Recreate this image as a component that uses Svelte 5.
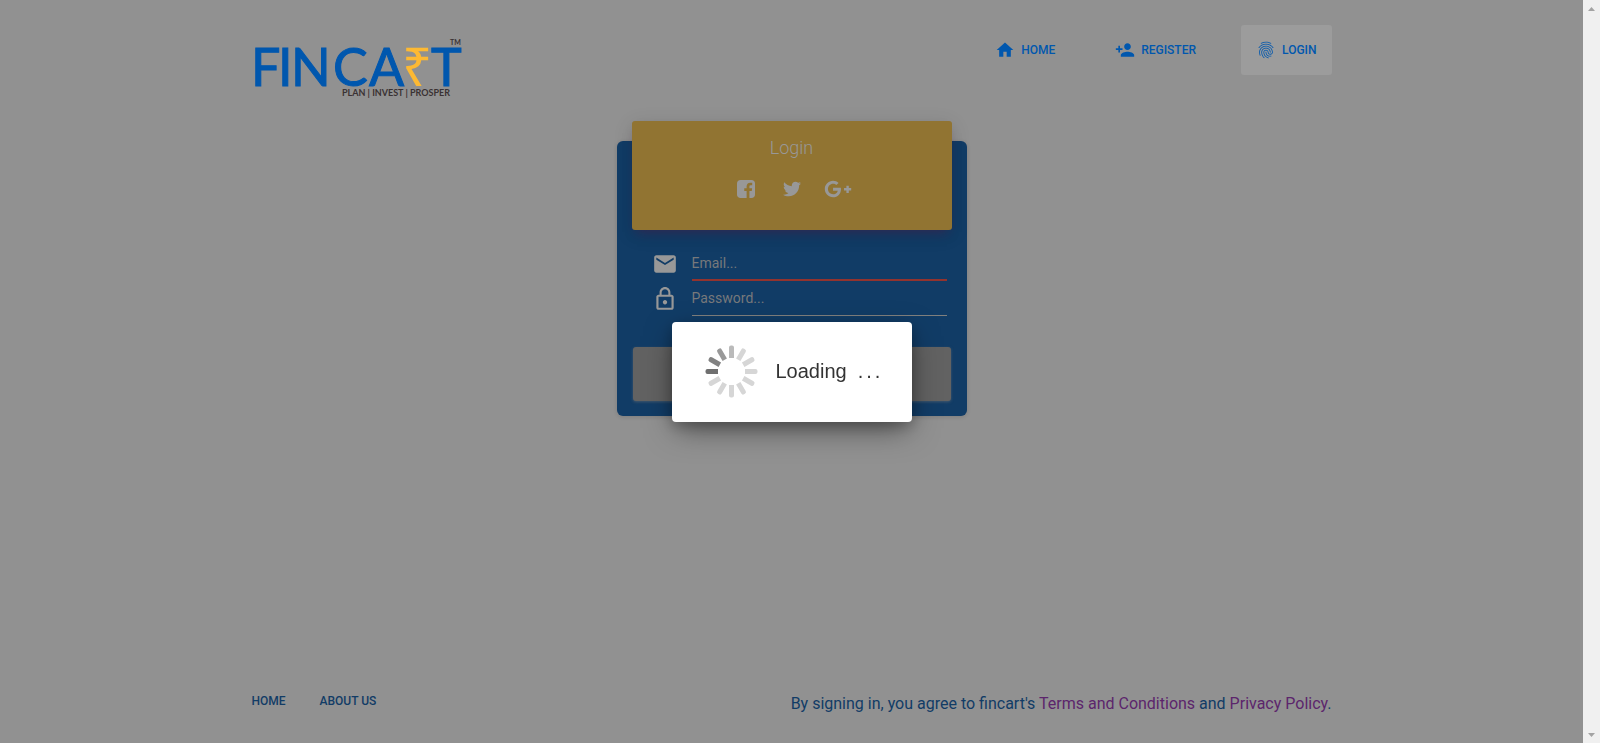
<script>
  const navItems = [
    { label: 'Home', icon: 'home', active: false },
    { label: 'Register', icon: 'register', active: false },
    { label: 'Login', icon: 'login', active: true }
  ];

  const icons = {
    home: 'M10 20v-6h4v6h5v-8h3L12 3 2 12h3v8z',
    register:
      'M15 12c2.21 0 4-1.79 4-4s-1.79-4-4-4-4 1.79-4 4 1.79 4 4 4zm-9-2V7H4v3H1v2h3v3h2v-3h3v-2H6zm9 4c-2.67 0-8 1.34-8 4v2h16v-2c0-2.66-5.33-4-8-4z',
    login:
      'M17.81 4.47c-.08 0-.16-.02-.23-.06C15.66 3.42 14 3 12.01 3c-1.98 0-3.86.47-5.57 1.41-.24.13-.54.04-.68-.2-.13-.24-.04-.55.2-.68C7.82 2.52 9.86 2 12.01 2c2.13 0 3.99.47 6.03 1.52.25.13.34.43.21.67-.09.18-.26.28-.44.28zM3.5 9.72c-.1 0-.2-.03-.29-.09-.23-.16-.28-.47-.12-.7.99-1.4 2.25-2.5 3.75-3.27C9.98 4.04 14 4.03 17.15 5.65c1.5.77 2.76 1.86 3.75 3.25.16.22.11.54-.12.7-.23.16-.54.11-.7-.12-.9-1.26-2.04-2.25-3.39-2.94-2.87-1.47-6.54-1.47-9.4.01-1.36.7-2.5 1.7-3.4 2.96-.08.14-.23.21-.39.21zm6.25 12.07c-.13 0-.26-.05-.35-.15-.87-.87-1.34-1.43-2.01-2.64-.69-1.23-1.05-2.73-1.05-4.34 0-2.97 2.54-5.39 5.66-5.39s5.66 2.42 5.66 5.39c0 .28-.22.5-.5.5s-.5-.22-.5-.5c0-2.42-2.09-4.39-4.66-4.39-2.57 0-4.66 1.97-4.66 4.39 0 1.44.32 2.77.93 3.85.64 1.15 1.08 1.64 1.85 2.42.19.2.19.51 0 .71-.11.1-.24.15-.37.15zm7.17-1.85c-1.19 0-2.24-.3-3.1-.89-1.49-1.01-2.38-2.65-2.38-4.39 0-.28.22-.5.5-.5s.5.22.5.5c0 1.41.72 2.74 1.94 3.56.71.48 1.54.71 2.54.71.24 0 .64-.03 1.04-.1.27-.05.53.13.58.41.05.27-.13.53-.41.58-.57.11-1.07.12-1.21.12zM14.91 22c-.04 0-.09-.01-.13-.02-1.59-.44-2.63-1.03-3.72-2.1-1.4-1.39-2.17-3.24-2.17-5.22 0-1.62 1.38-2.94 3.08-2.94 1.7 0 3.08 1.32 3.08 2.94 0 1.07.93 1.94 2.08 1.94s2.08-.87 2.08-1.94c0-3.77-3.25-6.83-7.25-6.83-2.84 0-5.44 1.58-6.61 4.03-.39.81-.59 1.76-.59 2.8 0 .78.07 2.01.67 3.61.1.26-.03.55-.29.64-.26.1-.55-.04-.64-.29-.49-1.31-.73-2.61-.73-3.96 0-1.2.23-2.29.68-3.24 1.33-2.79 4.28-4.6 7.51-4.6 4.55 0 8.25 3.51 8.25 7.83 0 1.62-1.38 2.94-3.08 2.94s-3.08-1.32-3.08-2.94c0-1.07-.93-1.94-2.08-1.94s-2.08.87-2.08 1.94c0 1.71.66 3.31 1.87 4.51.95.94 1.86 1.46 3.27 1.85.27.07.42.35.35.61-.05.23-.26.38-.47.38z'
  };

  const socials = [
    {
      name: 'Facebook',
      box: '0 128 1536 1536',
      w: 18,
      h: 18,
      d: 'M1248 128q119 0 203.500 84.500t84.500 203.500v960q0 119-84.500 203.500t-203.500 84.500h-188v-595h199l30-232h-229v-148q0-56 23.500-84t91.500-28l122-1v-207q-63-9-178-9-136 0-217.500 80t-81.500 226v171h-200v232h200v595h-532q-119 0-203.500-84.500t-84.500-203.500v-960q0-119 84.500-203.500t203.500-84.500h960z'
    },
    {
      name: 'Twitter',
      box: '0 0 512 512',
      w: 18,
      h: 18,
      d: 'M459.37 151.716c.325 4.548.325 9.097.325 13.645 0 138.72-105.583 298.558-298.558 298.558-59.452 0-114.68-17.219-161.137-47.106 8.447.974 16.568 1.299 25.34 1.299 49.055 0 94.213-16.568 130.274-44.832-46.132-.975-84.792-31.188-98.112-72.772 6.498.974 12.995 1.624 19.818 1.624 9.421 0 18.843-1.3 27.614-3.573-48.081-9.747-84.143-51.98-84.143-102.985v-1.299c13.969 7.797 30.214 12.67 47.431 13.319-28.264-18.843-46.781-51.005-46.781-87.391 0-19.492 5.197-37.36 14.294-52.954 51.655 63.675 129.3 105.258 216.365 109.807-1.624-7.797-2.599-15.918-2.599-24.04 0-57.828 46.782-104.934 104.934-104.934 30.213 0 57.502 12.67 76.67 33.137 23.715-4.548 46.456-13.32 66.599-25.34-7.798 24.366-24.366 44.833-46.132 57.827 21.117-2.273 41.584-8.122 60.426-16.243-14.292 20.791-32.161 39.308-52.628 54.253z'
    },
    {
      name: 'Google Plus',
      box: '0 0 640 512',
      w: 28,
      h: 22,
      d: 'M386.061 228.496c1.834 9.692 3.143 19.384 3.143 31.956C389.204 370.205 315.599 448 204.8 448c-106.084 0-192-85.915-192-192s85.916-192 192-192c51.864 0 95.083 18.859 128.611 50.292l-52.126 50.03c-14.145-13.621-39.028-29.599-76.485-29.599-65.484 0-118.92 54.221-118.92 121.277 0 67.056 53.436 121.277 118.92 121.277 75.961 0 104.513-54.745 108.965-82.773H204.8v-66.009h181.261zm185.406 6.437V179.2h-56.001v55.733h-55.733v56.001h55.733v55.733h56.001v-55.733H627.2v-56.001h-55.733z'
    }
  ];

  // Spinner blades, clockwise from the top.
  const blades = [
    '#bababa', '#d6d6d6', '#d6d6d6', '#d6d6d6', '#d6d6d6', '#d6d6d6',
    '#d6d6d6', '#d6d6d6', '#d6d6d6', '#6f6f6f', '#828282', '#999999'
  ];
</script>

<div class="shell">
  <div class="page">
    <header class="container">
      <a class="brand" href="#home" aria-label="Fincart">
        <svg width="222" height="85" viewBox="12 0 222 85">
          <g fill="#0057ae" stroke="#0057ae" stroke-width="1" font-family="Lato, sans-serif" font-size="52">
            <text x="11 38 51 93 129 191" y="61">FINCAT</text>
          </g>
          <text x="162" y="61" fill="#fdb933" font-family="'Noto Sans', sans-serif" font-size="53">₹</text>
          <text x="102" y="71" fill="#3a3233" font-family="Lato, sans-serif" font-weight="700" font-size="9">PLAN | INVEST | PROSPER</text>
          <text x="210" y="20" fill="#3a3233" font-family="Lato, sans-serif" font-weight="700" font-size="7">TM</text>
        </svg>
      </a>
      <nav>
        {#each navItems as item}
          <a class="nav-link" class:active={item.active} href={'#' + item.icon}>
            <svg width="20" height="20" viewBox="0 0 24 24"><path d={icons[item.icon]} /></svg>
            <span>{item.label}</span>
          </a>
        {/each}
      </nav>
    </header>

    <main>
      <form class="card" onsubmit={(e) => e.preventDefault()}>
        <div class="card-head">
          <h1>Login</h1>
          <div class="socials">
            {#each socials as s}
              <button type="button" aria-label={s.name}>
                <svg width={s.w} height={s.h} viewBox={s.box}><path d={s.d} /></svg>
              </button>
            {/each}
          </div>
        </div>
        <div class="fields">
          <div class="field">
            <label for="email" aria-label="Email">
              <svg width="26" height="26" viewBox="0 0 24 24"><path d="M20 4H4c-1.1 0-1.99.9-1.99 2L2 18c0 1.1.9 2 2 2h16c1.1 0 2-.9 2-2V6c0-1.1-.9-2-2-2zm0 4l-8 5-8-5V6l8 5 8-5v2z" /></svg>
            </label>
            <input id="email" class="invalid" type="email" placeholder="Email..." />
          </div>
          <div class="field">
            <label for="password" aria-label="Password">
              <svg width="26" height="26" viewBox="0 0 24 24"><path d="M12 17c1.1 0 2-.9 2-2s-.9-2-2-2-2 .9-2 2 .9 2 2 2zm6-9h-1V6c0-2.76-2.24-5-5-5S7 3.24 7 6v2H6c-1.1 0-2 .9-2 2v10c0 1.1.9 2 2 2h12c1.1 0 2-.9 2-2V10c0-1.100-.9-2-2-2zM8.900 6c0-1.710 1.390-3.100 3.100-3.100s3.100 1.390 3.100 3.100v2H8.900V6zM18 20H6V10h12v10z" /></svg>
            </label>
            <input id="password" type="password" placeholder="Password..." />
          </div>
        </div>
        <button class="submit" type="submit" aria-label="Login"></button>
      </form>
    </main>

    <footer class="container">
      <div class="foot-links">
        <a href="#home">Home</a>
        <a href="#about">About us</a>
      </div>
      <p>
        By signing in, you agree to fincart's <a href="#terms">Terms and Conditions</a> and
        <a href="#privacy">Privacy Policy</a>.
      </p>
    </footer>
  </div>

  <div class="scrollbar" aria-hidden="true">
    <svg width="17" height="17" viewBox="0 0 17 17"><path d="M5 11h7L8.500 7z" /></svg>
    <svg width="17" height="17" viewBox="0 0 17 17"><path d="M5 7h7l-3.500 4z" /></svg>
  </div>
</div>

<div class="overlay">
  <div class="dialog" role="status">
    <svg width="53" height="53" viewBox="-26.5 -26.5 53 53">
      {#each blades as color, i}
        <path d="M-2.500-13.500V-24a2 2 0 0 1 2-2h1a2 2 0 0 1 2 2v10.500z" fill={color} transform={`rotate(${i * 30})`} />
      {/each}
    </svg>
    <span class="loading">Loading</span>
    <span class="dots"><span>.</span><span>.</span><span>.</span></span>
  </div>
</div>

<style>
  :global(body) {
    margin: 0;
    background: #919191;
    font-family: Roboto, sans-serif;
  }
  svg {
    flex: none;
  }
  .shell {
    display: flex;
    min-height: 100vh;
  }
  .page {
    flex: 1;
    display: flex;
    flex-direction: column;
  }
  .container {
    box-sizing: border-box;
    width: 100%;
    max-width: 1140px;
    margin: 0 auto;
    padding: 0 30px;
    display: flex;
    justify-content: space-between;
    align-items: flex-start;
  }
  header.container {
    padding-top: 25px;
  }
  .brand,
  .brand svg {
    display: block;
  }
  nav {
    display: flex;
    gap: 30px;
  }
  .nav-link {
    display: flex;
    align-items: center;
    gap: 6px;
    height: 50px;
    padding: 0 15px;
    border-radius: 3px;
    color: #0057ae;
    fill: #0057ae;
    font-size: 12px;
    font-weight: 500;
    text-transform: uppercase;
    text-decoration: none;
  }
  .nav-link.active {
    background: #9c9c9c;
  }
  main {
    flex: 1;
    display: flex;
    justify-content: center;
    align-items: flex-start;
    padding: 31px 15px;
  }
  .card {
    box-sizing: border-box;
    width: 350px;
    padding: 0 15px 15px;
    border-radius: 6px;
    background: #113c66;
    box-shadow: 0 1px 4px rgba(0, 0, 0, 0.14);
    display: flex;
    flex-direction: column;
  }
  .card-head {
    margin-top: -20px;
    padding: 15px 0 21px;
    border-radius: 3px;
    background: #917432;
    box-shadow:
      0 4px 20px rgba(0, 0, 0, 0.12),
      0 7px 10px -5px rgba(90, 30, 80, 0.5);
  }
  h1 {
    margin: 0;
    color: #989898;
    font-size: 18px;
    font-weight: 300;
    line-height: 24px;
    text-align: center;
  }
  .socials {
    display: flex;
    justify-content: center;
    gap: 5px;
    margin-top: 9px;
  }
  .socials button {
    display: flex;
    align-items: center;
    justify-content: center;
    width: 41px;
    height: 40px;
    padding: 0;
    border: 0;
    background: none;
    fill: #989898;
  }
  .fields {
    display: flex;
    flex-direction: column;
    margin: 16px 5px 31px 20px;
  }
  .field {
    display: flex;
    align-items: center;
    gap: 14px;
    height: 35px;
  }
  .field label {
    display: flex;
    fill: #989898;
  }
  .field input {
    box-sizing: border-box;
    flex: 1;
    min-width: 0;
    height: 35px;
    padding: 0;
    border: 0;
    border-bottom: 1px solid #80807e;
    border-radius: 0;
    outline: 0;
    background: none;
    color: #989898;
    font: 400 14px Roboto, sans-serif;
  }
  .field input.invalid {
    border-bottom: 2px solid #93332e;
  }
  .field input::placeholder {
    color: #77797b;
  }
  .submit {
    height: 54px;
    margin: 0 1px;
    border: 0;
    border-radius: 3px;
    background: #626262;
    box-shadow: 0 1px 3px rgba(120, 120, 120, 0.5);
  }
  footer.container {
    padding-bottom: 29px;
    color: #113c66;
  }
  .foot-links {
    display: flex;
    gap: 34px;
    font-size: 12px;
    font-weight: 500;
    line-height: 14px;
    text-transform: uppercase;
  }
  .foot-links a {
    color: inherit;
    text-decoration: none;
  }
  footer p {
    margin: 0;
    font-size: 16px;
    font-weight: 400;
    line-height: 20px;
  }
  footer p a {
    color: #5c256c;
    text-decoration: none;
  }
  .scrollbar {
    width: 17px;
    background: #f0f0f0;
    fill: #a3a3a3;
    display: flex;
    flex-direction: column;
    justify-content: space-between;
  }
  .overlay {
    position: fixed;
    inset: 0 17px 0 0;
    display: flex;
    align-items: center;
    justify-content: center;
  }
  .dialog {
    box-sizing: border-box;
    width: 240px;
    height: 100px;
    padding: 0 30px 0 33px;
    border-radius: 4px;
    background: #fff;
    box-shadow:
      0 10px 30px -4px rgba(0, 0, 0, 0.5),
      0 4px 14px rgba(0, 0, 0, 0.2);
    display: flex;
    align-items: center;
    color: #333;
    font-family: 'Liberation Sans', Arial, sans-serif;
    font-size: 20px;
  }
  .loading {
    margin-left: 18px;
  }
  .dots {
    display: flex;
    gap: 3px;
    margin-left: 11px;
  }
</style>
